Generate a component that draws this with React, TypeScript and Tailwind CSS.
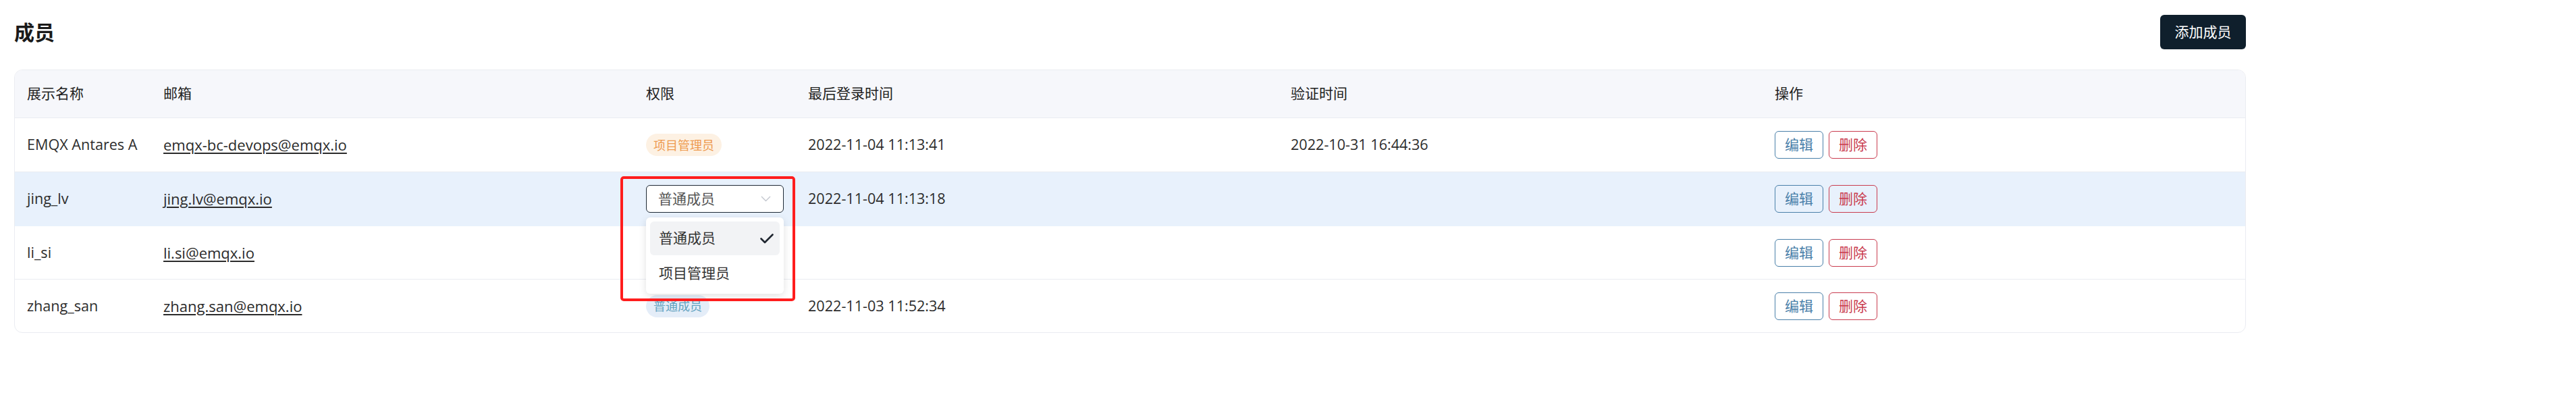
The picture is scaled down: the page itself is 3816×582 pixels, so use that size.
import React from "react";

const COLS = "grid grid-cols-[202px_715px_240px_715px_717px_1fr]";

function Badge({ kind }: { kind: "admin" | "member" }) {
  if (kind === "admin") {
    return (
      <span className="inline-flex items-center h-[33px] px-[11px] rounded-full bg-[#fdf1e3] text-[#ee9a4f] text-[18px] leading-none">
        项目管理员
      </span>
    );
  }
  return (
    <span className="inline-flex items-center h-[33px] px-[11px] rounded-full bg-[#e4edf8] text-[#62a2bf] text-[18px] leading-none">
      普通成员
    </span>
  );
}

function Actions() {
  return (
    <div className="flex gap-[8px]">
      <button className="h-[41px] w-[72px] rounded-[6px] border border-[#4a80a9] text-[#4a80a9] text-[21px] leading-none bg-transparent">
        编辑
      </button>
      <button className="h-[41px] w-[72px] rounded-[6px] border border-[#c93c4f] text-[#c93c4f] text-[21px] leading-none bg-transparent">
        删除
      </button>
    </div>
  );
}

function Cell({ children, className = "" }: { children?: React.ReactNode; className?: string }) {
  return <div className={"flex items-center px-[18px] whitespace-nowrap " + className}>{children}</div>;
}

function Latin({ children }: { children: React.ReactNode }) {
  return <span className="text-[21.6px]">{children}</span>;
}

function Email({ v }: { v: string }) {
  return <span className="text-[22px] underline underline-offset-[3px] decoration-[1.5px] text-[#2b2b2b]">{v}</span>;
}

export default function App() {
  return (
    <div className="w-[3816px] h-[582px] bg-white font-['Open_Sans','Noto_Sans_CJK_SC',sans-serif] text-[#2d2d2d]">
      <div className="w-[3348px] px-[21px] pt-[22px]">
        <div className="flex items-center justify-between h-[51px]">
          <h1 className="text-[30px] font-bold text-[#1a1a1a] leading-none">成员</h1>
          <button className="h-[51px] w-[127px] rounded-[6px] bg-[#0f1f2c] text-white text-[21px] leading-none">
            添加成员
          </button>
        </div>

        <div className="mt-[30px] border border-[#eaecf1] rounded-[12px] overflow-hidden text-[21px]">
          <div className={COLS + " h-[71px] bg-[#f6f7fb] border-b border-[#eaecf1] text-[#222]"}>
            <Cell>展示名称</Cell>
            <Cell>邮箱</Cell>
            <Cell>权限</Cell>
            <Cell>最后登录时间</Cell>
            <Cell>验证时间</Cell>
            <Cell>操作</Cell>
          </div>

          <div className={COLS + " h-[80px] border-b border-[#eaecf1]"}>
            <Cell>
              <Latin>EMQX Antares A</Latin>
            </Cell>
            <Cell>
              <Email v="emqx-bc-devops@emqx.io" />
            </Cell>
            <Cell>
              <Badge kind="admin" />
            </Cell>
            <Cell>
              <Latin>2022-11-04 11:13:41</Latin>
            </Cell>
            <Cell>
              <Latin>2022-10-31 16:44:36</Latin>
            </Cell>
            <Cell>
              <Actions />
            </Cell>
          </div>

          <div className={COLS + " h-[80px] bg-[#e8f1fc] border-b border-[#e8f1fc]"}>
            <Cell>
              <Latin>jing_lv</Latin>
            </Cell>
            <Cell>
              <Email v="jing.lv@emqx.io" />
            </Cell>
            <Cell className="relative">
              <div className="flex items-center justify-between w-[204px] h-[41px] rounded-[6px] border border-[#1f2a36] bg-white pl-[17px] pr-[18px] text-[#555]">
                <span>普通成员</span>
                <svg width="15" height="9" viewBox="0 0 15 9" fill="none">
                  <polyline points="1,1 7.5,7.5 14,1" stroke="#c3c7cf" strokeWidth="1.4" />
                </svg>
              </div>
              <div className="absolute z-10 left-[18px] top-[67px] w-[204px] h-[113px] bg-white rounded-[6px] shadow-[0_3px_12px_rgba(0,0,0,0.12)] px-[6px] pt-[6px] pb-[3px] flex flex-col text-[#333]">
                <div className="h-[50px] rounded-[6px] bg-[#f2f3f5] flex items-center justify-between pl-[13px] pr-[9px]">
                  <span>普通成员</span>
                  <svg width="20" height="15" viewBox="0 0 20 15" fill="none">
                    <polyline points="1.5,7.5 7,13 18.5,1.5" stroke="#1f2630" strokeWidth="2.6" strokeLinecap="round" strokeLinejoin="round" />
                  </svg>
                </div>
                <div className="h-[54px] flex items-center pl-[13px]">
                  <span>项目管理员</span>
                </div>
              </div>
              <div className="absolute z-20 left-[-20px] top-[6px] w-[259px] h-[185px] border-[4px] border-[#ff1d1d] rounded-[5px] pointer-events-none" />
            </Cell>
            <Cell>
              <Latin>2022-11-04 11:13:18</Latin>
            </Cell>
            <Cell></Cell>
            <Cell>
              <Actions />
            </Cell>
          </div>

          <div className={COLS + " h-[79px] border-b border-[#eaecf1]"}>
            <Cell>
              <Latin>li_si</Latin>
            </Cell>
            <Cell>
              <Email v="li.si@emqx.io" />
            </Cell>
            <Cell>
              <Badge kind="member" />
            </Cell>
            <Cell></Cell>
            <Cell></Cell>
            <Cell>
              <Actions />
            </Cell>
          </div>

          <div className={COLS + " h-[78px]"}>
            <Cell>
              <Latin>zhang_san</Latin>
            </Cell>
            <Cell>
              <Email v="zhang.san@emqx.io" />
            </Cell>
            <Cell>
              <Badge kind="member" />
            </Cell>
            <Cell>
              <Latin>2022-11-03 11:52:34</Latin>
            </Cell>
            <Cell></Cell>
            <Cell>
              <Actions />
            </Cell>
          </div>
        </div>
      </div>
    </div>
  );
}
